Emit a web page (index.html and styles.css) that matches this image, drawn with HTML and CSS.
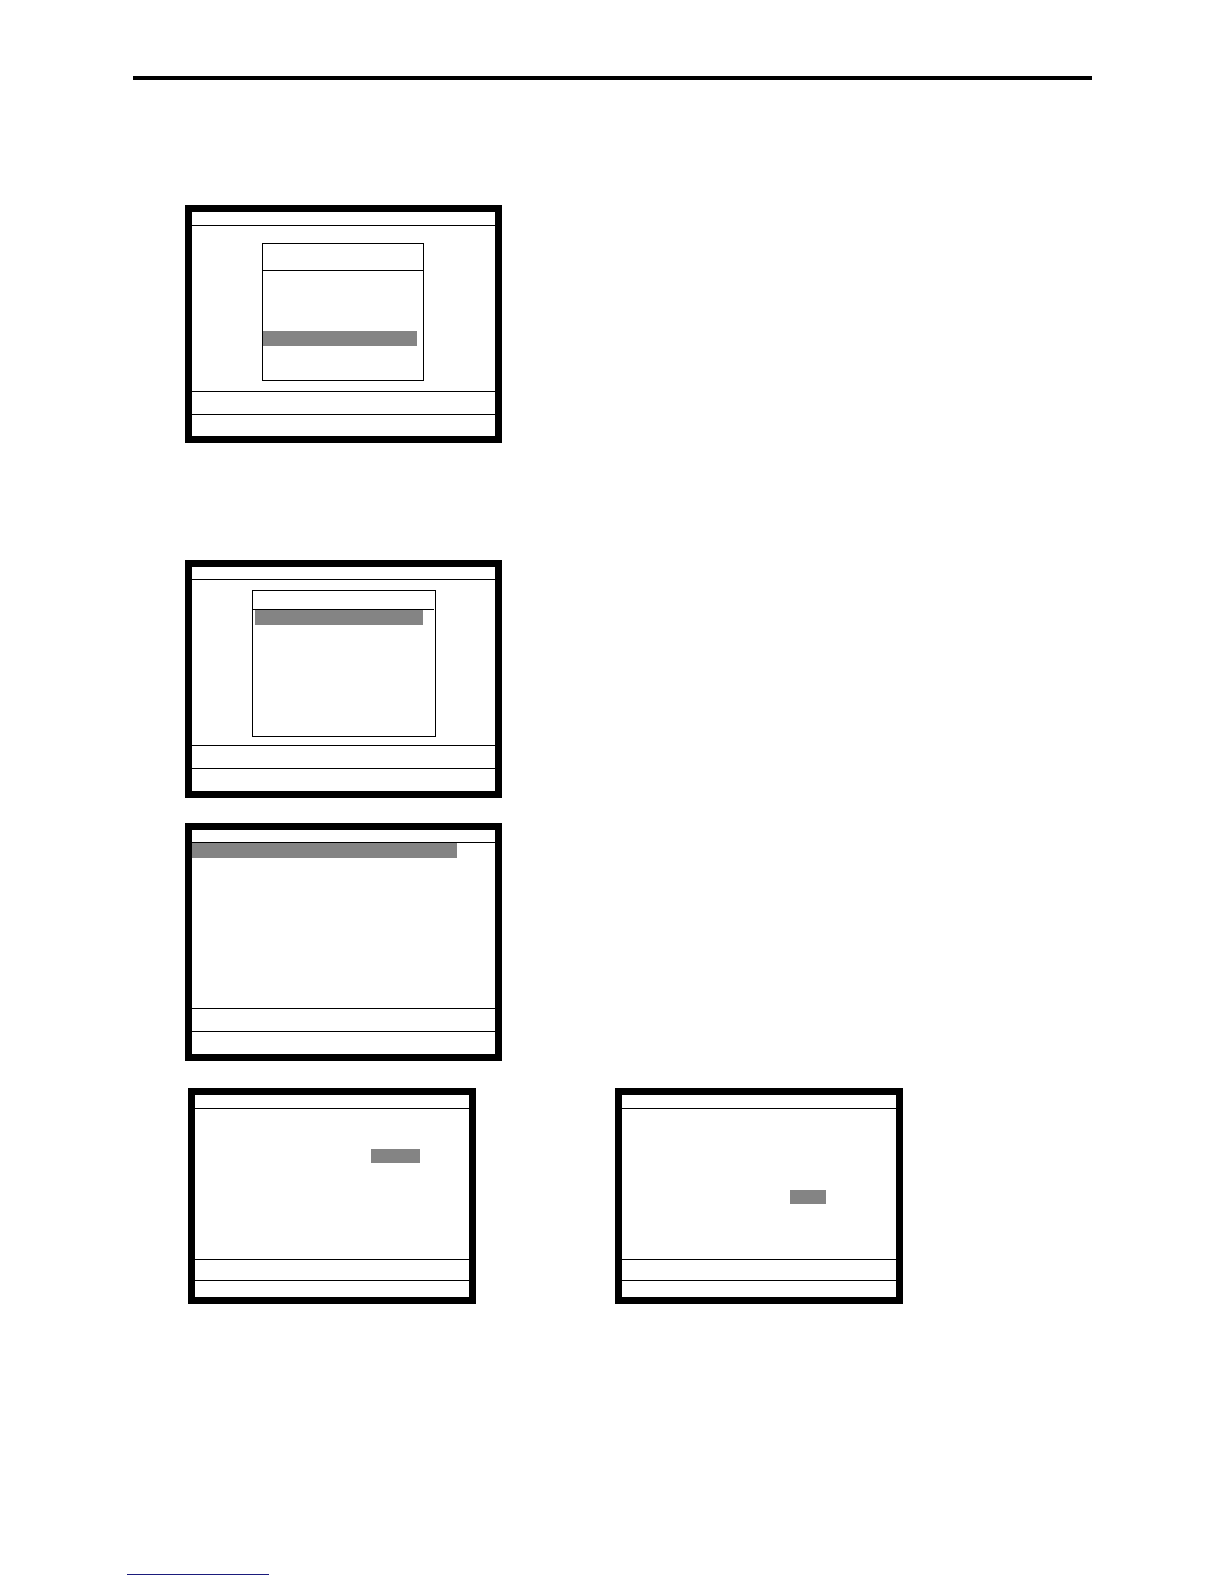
FILE: index.html
```html
<!DOCTYPE html>
<html lang="en">
<head>
<meta charset="utf-8">
<title>Screens</title>
<link rel="stylesheet" href="styles.css">
</head>
<body>
<div class="page">
  <div class="rule"></div>

  <div class="screen screen-large s1">
    <div class="scr-header"></div>
    <div class="scr-body">
      <div class="dialog dlg1">
        <div class="dlg-title"></div>
        <div class="dlg-list">
          <div class="sel"></div>
        </div>
      </div>
    </div>
    <div class="scr-foot1"></div>
    <div class="scr-foot2"></div>
  </div>

  <div class="screen screen-large s2">
    <div class="scr-header"></div>
    <div class="scr-body">
      <div class="dialog dlg2">
        <div class="dlg-title"></div>
        <div class="dlg-list">
          <div class="sel"></div>
        </div>
      </div>
    </div>
    <div class="scr-foot1"></div>
    <div class="scr-foot2"></div>
  </div>

  <div class="screen screen-large s3">
    <div class="scr-header"></div>
    <div class="scr-body">
      <div class="sel"></div>
    </div>
    <div class="scr-foot1"></div>
    <div class="scr-foot2"></div>
  </div>

  <div class="pair">
    <div class="screen screen-small s4">
      <div class="scr-header"></div>
      <div class="scr-body">
        <div class="sel"></div>
      </div>
      <div class="scr-foot1"></div>
      <div class="scr-foot2"></div>
    </div>
    <div class="screen screen-small s5">
      <div class="scr-header"></div>
      <div class="scr-body">
        <div class="sel"></div>
      </div>
      <div class="scr-foot1"></div>
      <div class="scr-foot2"></div>
    </div>
  </div>

  <div class="link-line"></div>
</div>
</body>
</html>
```

FILE: styles.css
```css
* {
  box-sizing: border-box;
}

html, body {
  margin: 0;
  padding: 0;
  background: #ffffff;
  font-family: "Liberation Sans", Arial, sans-serif;
}

.page {
  width: 1224px;
  height: 1584px;
  display: flex;
  flex-direction: column;
  align-items: flex-start;
  overflow: hidden;
}

.rule {
  margin-top: 76px;
  margin-left: 133px;
  width: 959px;
  height: 4px;
  background: #000;
}

.screen {
  border: 7px solid #000;
  background: #fff;
  display: flex;
  flex-direction: column;
}

.screen-large {
  width: 317px;
  height: 238px;
  margin-left: 185px;
}

.s1 { margin-top: 125px; }
.s2 { margin-top: 117px; }
.s3 { margin-top: 25px; }

.scr-header {
  height: 14px;
  border-bottom: 1px solid #000;
  flex: none;
}

.s2 .scr-header,
.s3 .scr-header {
  height: 13px;
}

.scr-body {
  height: 165px;
  flex: none;
  display: flex;
  flex-direction: column;
  align-items: flex-start;
}

.scr-foot1 {
  height: 23px;
  border-top: 1px solid #000;
  flex: none;
}

.scr-foot2 {
  flex: 1;
  border-top: 1px solid #000;
}

.sel {
  background: #848484;
  height: 15px;
  flex: none;
}

/* dialogs */
.dialog {
  border: 1px solid #000;
  display: flex;
  flex-direction: column;
}

.dlg-title {
  border-bottom: 1px solid #000;
  flex: none;
}

.dlg1 {
  margin-left: 70px;
  margin-top: 17px;
  width: 162px;
  height: 138px;
}

.dlg1 .dlg-title { height: 27px; }
.dlg1 .dlg-list { padding-top: 60px; }
.dlg1 .sel { width: 154px; }

.dlg2 {
  margin-left: 60px;
  margin-top: 10px;
  width: 184px;
  height: 147px;
}

.dlg2 .dlg-title { height: 19px; margin-right: 1px; }
.dlg2 .dlg-list { padding-left: 2px; }
.dlg2 .sel { width: 168px; }

.s3 .sel { width: 265px; }

/* small pair */
.pair {
  margin-top: 27px;
  margin-left: 188px;
  display: flex;
  gap: 139px;
}

.screen-small {
  width: 288px;
  height: 216px;
}

.screen-small .scr-header { height: 14px; }
.screen-small .scr-body { height: 150px; }
.screen-small .scr-foot1 { height: 21px; }
.screen-small .sel { height: 14px; }

.s4 .sel {
  margin-top: 40px;
  margin-left: 176px;
  width: 49px;
}

.s5 .sel {
  margin-top: 81px;
  margin-left: 168px;
  width: 36px;
}

.link-line {
  margin-top: 270px;
  margin-left: 127px;
  width: 142px;
  height: 1px;
  background: #1b1b7c;
}
```
